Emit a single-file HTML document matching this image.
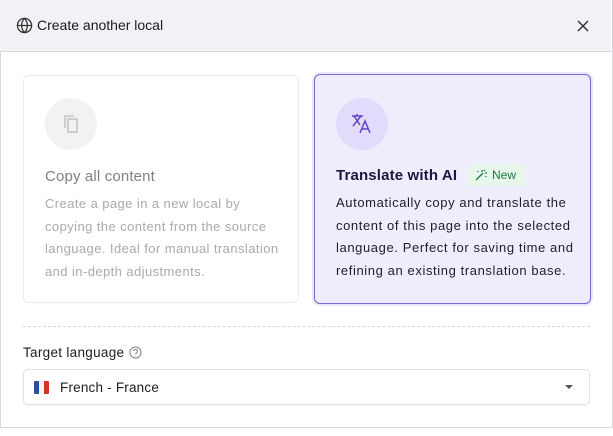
<!DOCTYPE html><html><head><style>
body{margin:0;width:613px;height:436px;overflow:hidden;background:#fff;font-family:"Liberation Sans",sans-serif;}
.wrap{position:absolute;left:0;top:0;width:611px;height:427px;border:1px solid #d9d9dd;border-top:none;border-bottom:1px solid #d9d9dd;}
.hdr{position:absolute;left:0;top:0;width:611px;height:51px;background:#f3f1f5;border-bottom:1px solid #d9d8dd;}
.hdr .t{position:absolute;left:37px;top:17px;font-size:14px;color:#1a1a1f;}
.card{position:absolute;top:75px;height:228px;border-radius:6px;box-sizing:border-box;}
.c1{left:23px;width:276px;border:1px solid #eceaee;}
.c2{left:314px;width:277px;top:74px;height:230px;border:1px solid #7b68d8;background:#efecfc;box-shadow:0 0 0 2px #e9e5fb;}
.circ{position:absolute;left:21px;top:22px;width:52px;height:52px;border-radius:50%;}
.ttl{position:absolute;left:21px;top:92px;font-size:15px;font-weight:bold;letter-spacing:.15px;}
.ds{position:absolute;left:21px;top:117px;width:238px;font-size:13px;line-height:22.6px;letter-spacing:.6px;}
</style></head><body>
<div class="wrap"></div>
<div class="hdr">
<svg style="position:absolute;left:16px;top:17px" width="17" height="17" viewBox="0 0 24 24" fill="none" stroke="#333" stroke-width="1.8"><circle cx="12" cy="12" r="10"/><path d="M2 12h20M12 2c3 3 4 6.5 4 10s-1 7-4 10c-3-3-4-6.5-4-10s1-7 4-10z"/></svg>
<div class="t">Create another local</div>
<svg style="position:absolute;left:577px;top:20px" width="12" height="12" viewBox="0 0 12 12" stroke="#333" stroke-width="1.5"><path d="M1 1l10 10M11 1L1 11"/></svg>
</div>
<div class="card c1">
<div class="circ" style="background:#f2f2f3"><svg style="position:absolute;left:17px;top:16px" width="18" height="20" viewBox="0 0 18 20" fill="none" stroke="#c4c4c8" stroke-width="1.6"><path d="M3 14V2h9"/><rect x="6" y="5" width="9" height="13"/></svg></div>
<div class="ttl" style="color:#7f7f86;font-weight:normal;">Copy all content</div>
<div class="ds" style="color:#a9a9ae;letter-spacing:.42px;width:242px">Create a page in a new local by copying the content from the source language. Ideal for manual translation and in-depth adjustments.</div>
</div>
<div class="card c2">
<div class="circ" style="background:#e2dbfb;top:23px"><svg style="position:absolute;left:15px;top:15px" width="22" height="22" viewBox="0 0 22 22" fill="none" stroke="#5b47c6" stroke-width="1.5"><path d="M1 3h11M6 1v2M3 3l6 9M10 3L2 13M9 20l5-12 5 12M11 16h6"/></svg></div>
<div class="ttl" style="color:#1b1740">Translate with AI</div>
<div style="position:absolute;left:153px;top:89px;width:57px;height:22px;background:#e6f6ea;border-radius:4px;color:#1f7a3d;font-size:12px;line-height:22px;"><svg style="position:absolute;left:7px;top:5px" width="12" height="12" viewBox="0 0 12 12" fill="none" stroke="#1f7a3d" stroke-width="1.3"><path d="M1 11l7-7M7 1v2M10 4h2M9 2l1-1M3 2v1M11 7v1"/></svg><span style="position:absolute;left:24px">New</span></div>
<div class="ds" style="color:#1f1d2b;width:245px">Automatically copy and translate the content of this page into the selected language. Perfect for saving time and refining an existing translation base.</div>
</div>
<div style="position:absolute;left:23px;top:326px;width:567px;border-top:1px dashed #d7d7da"></div>
<div style="position:absolute;left:23px;top:345px;font-size:13.5px;letter-spacing:.3px;color:#1d1d22">Target language</div>
<svg style="position:absolute;left:129px;top:346px" width="13" height="13" viewBox="0 0 14 14" fill="none" stroke="#777" stroke-width="1"><circle cx="7" cy="7" r="6"/><path d="M5 5.5a2 2 0 1 1 2.5 2V9M7 10.5v.5"/></svg>
<div style="position:absolute;left:23px;top:369px;width:567px;height:36px;box-sizing:border-box;border:1px solid #e1e0e5;border-radius:5px;box-shadow:0 1px 2px rgba(0,0,0,.05)">
<div style="position:absolute;left:10px;top:11px;width:5px;height:13px;background:#2b4ea3;border-radius:1px 0 0 1px"></div>
<div style="position:absolute;left:15px;top:11px;width:5px;height:13px;background:#f3f3f3"></div>
<div style="position:absolute;left:20px;top:11px;width:5px;height:13px;background:#d8322f;border-radius:0 1px 1px 0"></div>
<div style="position:absolute;left:36px;top:10px;font-size:13.5px;letter-spacing:.2px;color:#1d1d22">French - France</div>
<div style="position:absolute;left:541px;top:15px;border-left:4px solid transparent;border-right:4px solid transparent;border-top:4px solid #555"></div>
</div>
</body></html>
